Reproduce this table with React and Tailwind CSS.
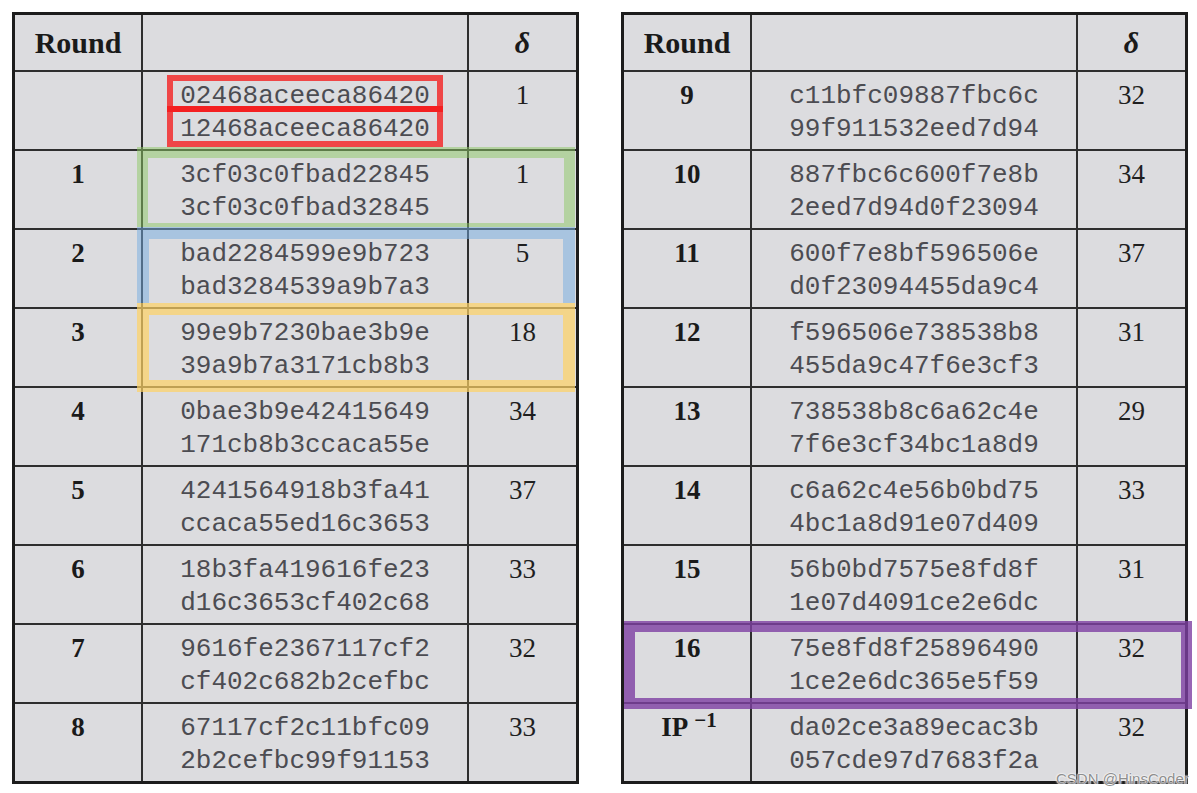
const left = [
  { r: '', a: '02468aceeca86420', b: '12468aceeca86420', d: '1' },
  { r: '1', a: '3cf03c0fbad22845', b: '3cf03c0fbad32845', d: '1' },
  { r: '2', a: 'bad2284599e9b723', b: 'bad3284539a9b7a3', d: '5' },
  { r: '3', a: '99e9b7230bae3b9e', b: '39a9b7a3171cb8b3', d: '18' },
  { r: '4', a: '0bae3b9e42415649', b: '171cb8b3ccaca55e', d: '34' },
  { r: '5', a: '4241564918b3fa41', b: 'ccaca55ed16c3653', d: '37' },
  { r: '6', a: '18b3fa419616fe23', b: 'd16c3653cf402c68', d: '33' },
  { r: '7', a: '9616fe2367117cf2', b: 'cf402c682b2cefbc', d: '32' },
  { r: '8', a: '67117cf2c11bfc09', b: '2b2cefbc99f91153', d: '33' },
];

const right = [
  { r: '9', a: 'c11bfc09887fbc6c', b: '99f911532eed7d94', d: '32' },
  { r: '10', a: '887fbc6c600f7e8b', b: '2eed7d94d0f23094', d: '34' },
  { r: '11', a: '600f7e8bf596506e', b: 'd0f23094455da9c4', d: '37' },
  { r: '12', a: 'f596506e738538b8', b: '455da9c47f6e3cf3', d: '31' },
  { r: '13', a: '738538b8c6a62c4e', b: '7f6e3cf34bc1a8d9', d: '29' },
  { r: '14', a: 'c6a62c4e56b0bd75', b: '4bc1a8d91e07d409', d: '33' },
  { r: '15', a: '56b0bd7575e8fd8f', b: '1e07d4091ce2e6dc', d: '31' },
  { r: '16', a: '75e8fd8f25896490', b: '1ce2e6dc365e5f59', d: '32' },
  { r: 'IP', a: 'da02ce3a89ecac3b', b: '057cde97d7683f2a', d: '32' },
];

const serif = "font-['Liberation_Serif','Times_New_Roman',serif]";

function Table({ rows }) {
  return (
    <div className="grid grid-cols-[126px_324px_1fr] grid-rows-[55px_repeat(9,77px)] gap-[2px] bg-[#2e2e2e] border-[3px] border-[#1c1c1c] w-[567px]">
      <div className={`bg-[#dcdcdf] flex items-center justify-center ${serif} font-bold text-[30px] text-[#1a1a1a]`}>Round</div>
      <div className="bg-[#dcdcdf]" />
      <div className={`bg-[#dcdcdf] flex items-center justify-center ${serif} italic font-bold text-[30px] text-[#1a1a1a]`}>δ</div>
      {rows.map((row, i) => (
        <Row key={i} row={row} />
      ))}
    </div>
  );
}

function Row({ row }) {
  return (
    <>
      <div className={`bg-[#dcdcdf] pt-[7px] text-center leading-[33px] ${serif} font-bold text-[27px] text-[#1a1a1a]`}>
        {row.r === 'IP' ? (
          <span className="relative left-[2px]">
            IP<span className="relative -top-[9px] ml-[6px] text-[21px]">−1</span>
          </span>
        ) : (
          row.r
        )}
      </div>
      <div className="bg-[#dcdcdf] pt-[8px] flex flex-col items-center font-['Liberation_Mono','Courier_New',monospace] text-[26px] leading-[33px] text-[#4c4c52]">
        <span>{row.a}</span>
        <span>{row.b}</span>
      </div>
      <div className={`bg-[#dcdcdf] pt-[7px] text-center leading-[33px] ${serif} text-[27px] text-[#1f1f1f]`}>
        {row.d}
      </div>
    </>
  );
}

export default function App() {
  return (
    <div className="relative w-[1197px] h-[793px] bg-white overflow-hidden">
      <div className="flex pt-[12px] pl-[12px] gap-[42px]">
        <Table rows={left} />
        <Table rows={right} />
      </div>

      {/* highlight boxes drawn over the tables */}
      <div className="absolute left-[167px] top-[75px] w-[276px] h-[37px] border-[6px] border-[rgba(245,20,20,0.75)]" />
      <div className="absolute left-[167px] top-[106px] w-[276px] h-[41px] border-[6px] border-[rgba(245,20,20,0.75)]" />
      <div className="absolute left-[137px] top-[147px] w-[438px] h-[80px] border-[11px] border-b-[4px] border-[rgba(140,200,100,0.5)]" />
      <div className="absolute left-[137px] top-[227px] w-[438px] h-[76px] border-[12px] border-b-0 border-[rgba(116,172,225,0.5)]" />
      <div className="absolute left-[137px] top-[303px] w-[438px] h-[89px] border-[12px] border-[rgba(253,210,100,0.7)]" />
      <div className="absolute left-[624px] top-[621px] w-[568px] h-[88px] border-[11px] border-[rgba(126,64,162,0.8)]" />

      <div className="absolute left-[1056px] top-[768px] text-[15px] font-['Liberation_Sans',Arial,sans-serif] text-[#8e8e8e] [text-shadow:0_0_2px_#fff,0_0_2px_#fff,0_0_1px_#fff]">
        CSDN @HinsCoder
      </div>
    </div>
  );
}
